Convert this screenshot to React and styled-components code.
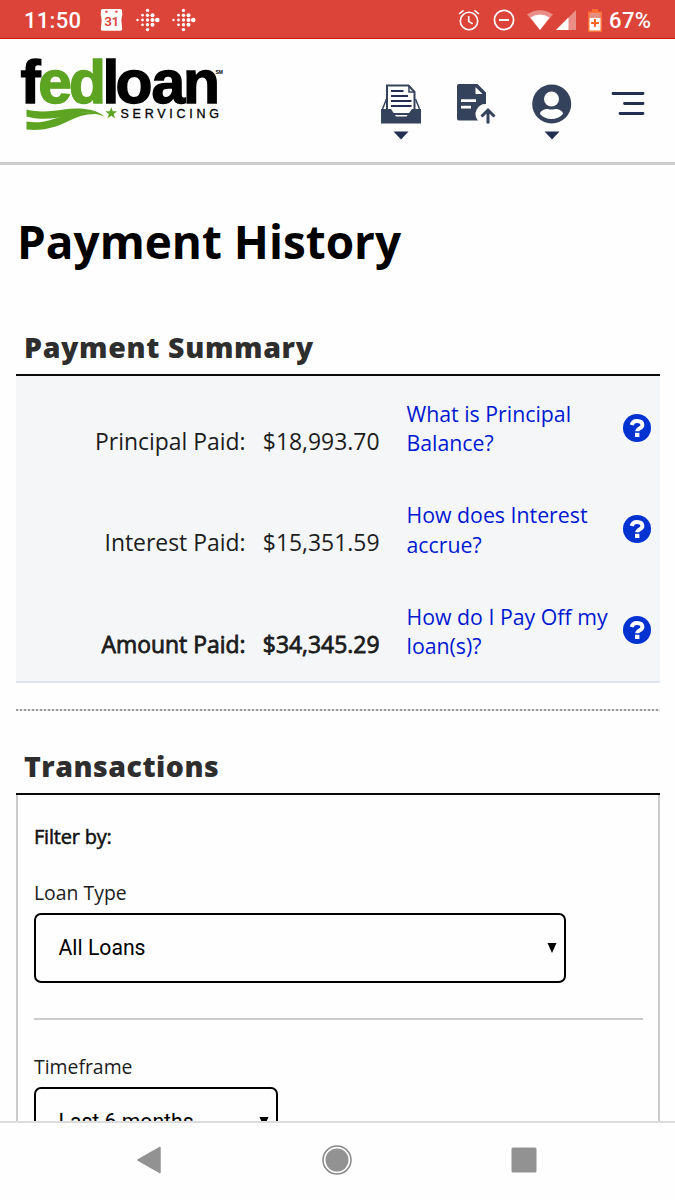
import React from "react";
import styled, { createGlobalStyle, css } from "styled-components";

const GlobalStyle = createGlobalStyle`
  * {
    box-sizing: border-box;
  }

  body {
    margin: 0;
    background: #fff;
    overflow: hidden;
  }
`;

const Screen = styled.div`
  display: flex;
  flex-direction: column;
  width: 675px;
  height: 1200px;
  overflow: hidden;
  background: #fefefe;
  color: #1c1c1c;
  font-family: "Open Sans", "Noto Sans", sans-serif;
`;

const StatusBar = styled.div`
  display: flex;
  flex: none;
  align-items: center;
  justify-content: space-between;
  height: 39px;
  padding: 2px 23px 0 24px;
  background: #dc4439;
  border-bottom: 1px solid #cf1710;
  color: #fff;
  font: 500 22px/36px Roboto, sans-serif;
`;

const StatusGroup = styled.div`
  display: flex;
  align-items: center;
`;

const StatusText = styled.span`
  width: ${(props) => props.$width}px;
  margin-left: ${(props) => props.$gap || 0}px;
  padding-top: 2px;
  white-space: nowrap;
  letter-spacing: ${(props) => props.$spacing || 0}px;
`;

const StatusIcon = styled.svg`
  display: block;
  flex: none;
  margin-left: ${(props) => props.$gap}px;
`;

const Header = styled.header`
  display: flex;
  flex: none;
  justify-content: space-between;
  height: 126px;
  padding: 1px 30px 0 18px;
  border-bottom: 3px solid #ccc;
`;

const Logo = styled.svg`
  display: block;
`;

const HeaderNav = styled.nav`
  display: flex;
  padding-top: 44px;
`;

const NavButton = styled.button`
  display: flex;
  flex-direction: column;
  align-items: center;
  gap: 7px;
  width: ${(props) => props.$width || 40}px;
  margin-left: ${(props) => props.$gap || 0}px;
  padding: 0;
  border: 0;
  background: none;
  height: 60px;
`;

const Main = styled.main`
  flex: 1;
  min-height: 0;
  overflow: hidden;
  padding: 0 15px 0 16px;
`;

const PageTitle = styled.h1`
  margin: 44px 0 0 1px;
  color: #000;
  font-size: 45.9px;
  font-weight: 700;
  line-height: 64px;
`;

const SectionTitle = styled.h2`
  margin: ${(props) => props.$top}px 0 0;
  padding-left: 8px;
  height: 48px;
  border-bottom: 2px solid #0a0a0a;
  color: #2e2e2e;
  font-size: 28.5px;
  font-weight: 800;
  line-height: 38px;
  letter-spacing: ${(props) => props.$spacing}px;
`;

const Summary = styled.div`
  height: 307px;
  background: #f4f6f8;
  border-bottom: 2px solid #dfe3ec;
`;

const fauxBold = css`
  -webkit-text-stroke: 0.8px currentColor;
`;

const SummaryRow = styled.div`
  display: grid;
  grid-template-columns: 229.5px 134px 217.5px 28px;
  height: 101.3px;
  padding-top: 23px;
`;

const Amount = styled.span`
  padding-top: 26px;
  text-align: right;
  font-size: 22.9px;
  line-height: 34px;
  white-space: nowrap;
  ${(props) => props.$bold && fauxBold}
`;

const HelpLink = styled.a`
  width: 212px;
  margin-left: 27px;
  color: #0018d0;
  font-size: 21.3px;
  line-height: 29.3px;
  white-space: pre-line;
`;

const HelpIcon = styled.svg`
  display: block;
  margin-top: 14.5px;
  margin-left: 26px;
  overflow: visible;
`;

const Divider = styled.div`
  height: 2px;
  margin-top: 26px;
  background: repeating-linear-gradient(to right, #999 0 2px, #e8e8e8 2px 4px);
`;

const FilterPanel = styled.div`
  height: 500px;
  padding: 27px 15px 0 16px;
  border: 2px solid #ccc;
  border-top: 0;
`;

const FilterHeading = styled.div`
  font-size: 20px;
  line-height: 29px;
  color: #111;
  letter-spacing: -0.2px;
  -webkit-text-stroke: 0.5px currentColor;
`;

const FieldLabel = styled.div`
  margin-top: ${(props) => props.$top}px;
  font-size: 19.4px;
  line-height: 28px;
`;

const SelectBox = styled.div`
  display: flex;
  align-items: center;
  justify-content: space-between;
  width: ${(props) => props.$width}px;
  height: 70px;
  margin-top: 6px;
  padding: 0 7px 1px 22.5px;
  border: 2px solid #000;
  border-radius: 7px;
  color: #000;
  font: 21.2px Roboto, sans-serif;
`;

const Rule = styled.div`
  height: 2px;
  margin-top: 35px;
  background: #ccc;
`;

const NavBar = styled.div`
  display: flex;
  flex: none;
  align-items: center;
  justify-content: space-between;
  height: 79px;
  padding: 0 138px 3px 136px;
  border-top: 2px solid #dcdcdc;
  background: #fefefe;
`;

const rows = [
  { label: "Principal Paid:", amount: "$18,993.70", help: "What is Principal\nBalance?" },
  { label: "Interest Paid:", amount: "$15,351.59", help: "How does Interest\naccrue?" },
  { label: "Amount Paid:", amount: "$34,345.29", help: "How do I Pay Off my\nloan(s)?", bold: true },
];

// columns of the fitbit mark: [x, rows of dots, radius]
const fitbitDots = [
  [1.5, [0], 1.2],
  [6.5, [-1, 0, 1], 1.4],
  [11.5, [-2, -1, 0, 1, 2], 1.7],
  [16.5, [-1, 0, 1], 2],
  [21.3, [0], 2.3],
];

const FitbitIcon = ({ gap }) => (
  <StatusIcon $gap={gap} width="24" height="24" viewBox="0 0 24 24" fill="#fff">
    {fitbitDots.map(([x, ys, r]) =>
      ys.map((y) => <circle key={`${x}${y}`} cx={x} cy={12 + y * 4.8} r={r} />)
    )}
  </StatusIcon>
);

const CalendarIcon = () => (
  <StatusIcon $gap="18" width="23" height="24" viewBox="0 0 23 24">
    <path
      fill="#fff"
      d="M2.500 1h18q1.500 0 1.500 1.500l.3 4-1 5.500.9 9q0 1.800-1.500 1.800H2.300Q.8 22.800.8 21l.9-9-1-5.500.3-4Q1 1 2.500 1z"
    />
    <path fill="#dc4439" d="M5.300 2.700h2.200v2H5.300zM15.300 2.700h2.200v2h-2.200z" />
    <text x="11.500" y="18.300" fill="#dc4439" fontFamily="Roboto" fontSize="13.500" fontWeight="600" letterSpacing="-.5" textAnchor="middle">
      31
    </text>
  </StatusIcon>
);

const Caret = () => (
  <svg width="16" height="9" viewBox="0 0 16 9">
    <path fill="#222f52" d="M0.500.500h15L8 8.500z" />
  </svg>
);

const SelectArrow = () => (
  <svg width="10" height="10" viewBox="0 0 10 10">
    <path d="M.5 0h9L5 10z" />
  </svg>
);

const FedloanLogo = () => (
  <Logo width="210" height="100" viewBox="18 40 210 100">
    <text y="102.500" x="20.500 38.300 69 102.500 115.500 151.500 183" fontFamily="Liberation Sans" fontWeight="700" fontSize="60.500" strokeWidth="1.400">
      <tspan stroke="#000">f</tspan>
      <tspan fill="#5da423" stroke="#5da423">ed</tspan>
      <tspan stroke="#000">loan</tspan>
    </text>
    <text x="215.500" y="73.500" fontFamily="Liberation Sans" fontSize="5" fontWeight="700">SM</text>
    <text x="120.500" y="117.500" fontFamily="Liberation Sans" fontSize="12.500" textLength="98.500" stroke="#000" strokeWidth=".3">
      SERVICING
    </text>
    <g fill="#5da423">
      <path d="M26.500 109.500c14 3.500 26 1.500 37 0 16-2 31-1 41 7-14-5.500-23-4.500-33-2-16 4.500-31 6-45 2z" />
      <path d="M26.500 121.500c15 2.500 25-1.500 36-5.500 12-4 23-5.200 36-2-13-.5-21 2.500-31 7.500-14 7-27 9.500-41 8z" />
      <path d="M111.300 107.300l1.500 4h4.400l-3.500 2.700 1.300 4.300-3.700-2.500-3.800 2.500 1.400-4.300-3.600-2.700h4.400z" />
    </g>
  </Logo>
);

const App = () => {
  return (
    <Screen>
      <GlobalStyle />
      <StatusBar>
        <StatusGroup>
          <StatusText $width="58" $spacing="0.3">11:50</StatusText>
          <CalendarIcon />
          <FitbitIcon gap="13" />
          <FitbitIcon gap="12" />
        </StatusGroup>
        <StatusGroup>
          <StatusIcon $gap="0" width="22" height="22" viewBox="0 0 22 22" fill="none" stroke="#fff" strokeWidth="1.600">
            <circle cx="11" cy="12" r="8.700" />
            <path d="M10.700 7v5.300l4 2.600M1 5l4.500-3.700M21 5l-4.500-3.700" />
          </StatusIcon>
          <StatusIcon $gap="13" width="22" height="22" viewBox="0 0 22 22" fill="none" stroke="#fff" strokeWidth="1.700">
            <circle cx="11" cy="11" r="9.600" />
            <path d="M6 11h10" strokeWidth="2" />
          </StatusIcon>
          <StatusIcon $gap="12" width="26" height="20" viewBox="0 0 26 20" fill="#fff">
            <path opacity=".4" d="M0 4.500Q13-4 26 4.500L13 20z" />
            <path d="M3.500 7.500Q13 1.500 22.500 7.500L13 20z" />
          </StatusIcon>
          <StatusIcon $gap="3" width="20" height="20" viewBox="0 0 20 20" fill="#fff">
            <path opacity=".4" d="M20 0v20H0z" />
            <path d="M12.500 7.500V20H0z" />
          </StatusIcon>
          <StatusIcon $gap="12" width="14" height="23" viewBox="0 0 14 23">
            <path fill="#ff6e35" d="M4 0h6v2.500h4V23H0V2.500h4z" />
            <path fill="#e58e82" d="M1.500 4h11v5h-11z" />
            <path fill="#fff" d="M1.500 9h11v12.500h-11z" />
            <path stroke="#ff6424" strokeWidth="2" d="M7 10v8M3 14h8" />
          </StatusIcon>
          <StatusText $width="43" $gap="7" $spacing="0.4">67%</StatusText>
        </StatusGroup>
      </StatusBar>

      <Header>
        <FedloanLogo />
        <HeaderNav>
          <NavButton aria-label="Inbox">
            <svg width="40" height="40" viewBox="0 0 40 40">
              <path fill="#fff" stroke="#34425b" strokeWidth="2" d="M6 30V1.500h21.500l6 6.500v22z" />
              <path fill="none" stroke="#34425b" strokeWidth="1.500" d="M5.500 15L1.500 25M34.500 15l4 10M28 1v7h6" />
              <path stroke="#222f52" strokeWidth="2" d="M10 7h12.500M10 12h17M10 17h20.500M10 22h20.500" />
              <path fill="#34425b" d="M0 25h10l5 7.500h10.500L31 25h9v14.500H0z" />
            </svg>
            <Caret />
          </NavButton>
          <NavButton aria-label="Upload" $gap="35">
            <svg width="40" height="40" viewBox="0 0 40 40">
              <path fill="#34425b" d="M2.500 0h19L30 8.500V20a10 10 0 0 0-8 16.500H3a2 2 0 0 1-2-2V2a2 2 0 0 1 1.500-2z" />
              <path fill="#fff" d="M19.500 3v7h7zM5 15.300h15v2.800H5zM5 21.800h10v2.800H5z" />
              <path fill="none" stroke="#34425b" strokeWidth="3" d="M32 39.500V27M25.500 32.500l6.500-6.500 6.500 6.500" />
            </svg>
          </NavButton>
          <NavButton aria-label="Account" $gap="36">
            <svg width="40" height="40" viewBox="0 0 40 40">
              <circle cx="19.700" cy="20" r="19.500" fill="#34425b" />
              <circle cx="19.500" cy="15" r="7.500" fill="#fff" />
              <path fill="#fff" d="M8 30c0-3 4-5 8-5q3.500 1 7 0c4 0 8 2 8 5-3 3.500-7 5-11.500 5S11 33.500 8 30z" />
            </svg>
            <Caret />
          </NavButton>
          <NavButton aria-label="Menu" $gap="39" $width="34">
            <svg width="34" height="40" viewBox="0 0 34 40">
              <path stroke="#222f52" strokeWidth="2.800" strokeLinecap="round" d="M2 9.500h30M13.500 19.500H32M9 29.500h23" />
            </svg>
          </NavButton>
        </HeaderNav>
      </Header>

      <Main>
        <PageTitle>Payment History</PageTitle>

        <SectionTitle $top="55" $spacing="0.65">Payment Summary</SectionTitle>
        <Summary>
          {rows.map((row) => (
            <SummaryRow key={row.label}>
              <Amount $bold={row.bold}>{row.label}</Amount>
              <Amount $bold={row.bold}>{row.amount}</Amount>
              <HelpLink>{row.help}</HelpLink>
              <HelpIcon width="28" height="28" viewBox="0 0 28 28">
                <circle cx="14" cy="14" r="14" fill="#0032d2" />
                <path fill="none" stroke="#fff" strokeWidth="4" d="M8.700 11C9.300 8 11 7 14 7c3.500 0 5.400 1.500 5.400 4 0 3.500-5.200 3.200-5.200 6.300" />
                <path fill="#fff" d="M12 18.800h4.400V23H12z" />
              </HelpIcon>
            </SummaryRow>
          ))}
        </Summary>

        <Divider />

        <SectionTitle $top="36" $spacing="0.5">Transactions</SectionTitle>
        <FilterPanel>
          <FilterHeading>Filter by:</FilterHeading>
          <FieldLabel $top="28">Loan Type</FieldLabel>
          <SelectBox $width="532">
            All Loans
            <SelectArrow />
          </SelectBox>
          <Rule />
          <FieldLabel $top="33">Timeframe</FieldLabel>
          <SelectBox $width="244">
            Last 6 months
            <SelectArrow />
          </SelectBox>
        </FilterPanel>
      </Main>

      <NavBar>
        <svg width="26" height="28" viewBox="0 0 26 28">
          <path fill="#929292" stroke="#929292" strokeWidth="1.500" strokeLinejoin="round" d="M2 14L24 1.500v25z" />
        </svg>
        <svg width="30" height="30" viewBox="0 0 30 30">
          <circle cx="15" cy="15" r="14" fill="none" stroke="#888" strokeWidth="1.500" />
          <circle cx="15" cy="15" r="11.500" fill="#929292" />
        </svg>
        <svg width="26" height="26" viewBox="0 0 26 26">
          <rect x="0.500" y="0.500" width="25" height="25" rx="1.500" fill="#929292" />
        </svg>
      </NavBar>
    </Screen>
  );
};

export default App;
